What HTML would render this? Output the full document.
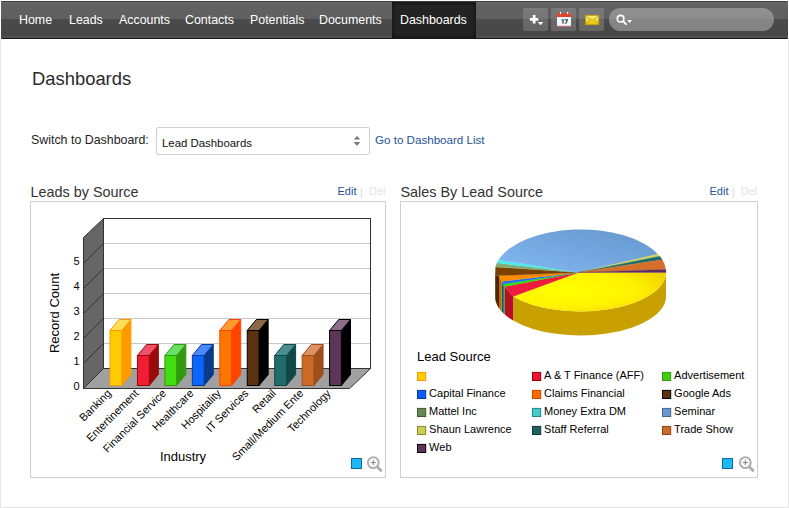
<!DOCTYPE html>
<html><head><meta charset="utf-8">
<style>
*{margin:0;padding:0;box-sizing:border-box}
html,body{width:789px;height:508px;overflow:hidden;background:#fff}
body{position:relative;font-family:"Liberation Sans",sans-serif;color:#222}
.abs{position:absolute;white-space:nowrap}
#frame{position:absolute;left:0;top:39px;width:789px;height:469px;border-left:1px solid #e6e6e6;border-right:1px solid #e6e6e6;border-bottom:1px solid #e6e6e6}
#nav{position:absolute;left:1px;top:1px;width:787px;height:38px;background:linear-gradient(#6b6b6b 0,#666 1px,#626262 3px,#5f5f5f 17px,#4b4b4b 17px,#474747 33px,#4f4f4f 34px,#4f4f4f 35px);border-top:1px solid #3a3a3a;border-bottom:1px solid #181818;border-radius:1px}
.nt{position:absolute;top:10px;font-size:12.4px;color:#fff;line-height:16px}
#act{position:absolute;left:391px;top:0;width:84px;height:36px;background:#232323;box-shadow:inset 0 0 4px #0a0a0a}
.btn{position:absolute;top:8px;width:25px;height:23px;border-radius:2px;background:linear-gradient(#7a7a7a,#747474 11px,#6a6a6a 11px,#666)}
#search{position:absolute;left:609px;top:8px;width:165px;height:23px;border-radius:11.5px;background:linear-gradient(#8f8f8f,#8d8d8d 50%,#868686 50%,#838383)}
.title{font-size:18.4px;color:#2a2a2a}
.panel{position:absolute;border:1px solid #cfcfcf}
.ph{font-size:14.4px;color:#333}
.lnk{font-size:11px;color:#1f5499}
.del{font-size:11px;color:#e4e4e4}
</style></head>
<body>
<div id="frame"></div>
<div id="nav">
  <div id="act"></div>
  <div class="nt" id="n1" style="left:18px">Home</div>
  <div class="nt" id="n2" style="left:68px">Leads</div>
  <div class="nt" id="n3" style="left:118px">Accounts</div>
  <div class="nt" id="n4" style="left:184px">Contacts</div>
  <div class="nt" id="n5" style="left:249px">Potentials</div>
  <div class="nt" id="n6" style="left:318px">Documents</div>
  <div class="nt" id="n7" style="left:399px">Dashboards</div>
  
</div>

<div class="btn" style="left:523px"></div>
<div class="btn" style="left:551px"></div>
<div class="btn" style="left:579px"></div>
<div id="search"></div>
<svg width="789" height="40" style="position:absolute;left:0;top:0">
  <defs>
    <linearGradient id="env" x1="0" y1="0" x2="0" y2="1"><stop offset="0" stop-color="#fff27a"/><stop offset="1" stop-color="#e6c200"/></linearGradient>
  </defs>
  <path d="M529.9 18h8.4v2.7h-8.4z M532.8 15h2.7v8.4h-2.7z" fill="#fff"/>
  <path d="M537.8 22.1h5.5l-2.75 3.1z" fill="#fff"/>
  <rect x="557" y="13" width="14" height="13.6" rx="1" fill="#f4f8fb"/>
  <path d="M557 14 q0 -1 1 -1 h12 q1 0 1 1 v3 h-14z" fill="#e0442a"/>
  <rect x="557" y="25.8" width="14" height="1" fill="#c85a6a"/>
  <rect x="560" y="11.8" width="1.2" height="2.4" rx="0.6" fill="#fff"/>
  <rect x="567" y="11.8" width="1.2" height="2.4" rx="0.6" fill="#fff"/>
  <path d="M561.4 19.8 l1.3 -0.6 h0.9 v4.6 h-1.2 v-3.5 l-1 0.4z M564.5 19.2 h3.5 v1 l-1.9 3.6 h-1.3 l1.9 -3.6 h-2.2z" fill="#2b3e50"/>
  <rect x="585.4" y="15.3" width="13.4" height="9.4" fill="url(#env)" stroke="#c9a200" stroke-width="0.8"/>
  <path d="M585.8 15.7 L592.1 20.6 L598.4 15.7 M585.8 24.3 L590.3 19.4 M598.4 24.3 L593.9 19.4" stroke="#b89400" stroke-width="0.7" fill="none"/>
  <circle cx="620.6" cy="18.7" r="3.3" fill="none" stroke="#fff" stroke-width="1.6"/>
  <path d="M623 21.1 L626 24.1" stroke="#fff" stroke-width="2" stroke-linecap="round"/>
  <path d="M627.1 20h4.9l-2.45 3.1z" fill="#fff"/>
</svg>

<div class="abs title" id="t1" style="left:32px;top:68px">Dashboards</div>
<div class="abs" id="t2" style="left:31px;top:133px;font-size:12.4px;color:#222">Switch to Dashboard:</div>
<div class="abs" id="sel" style="left:156px;top:127px;width:214px;height:28px;border:1px solid #d0d0d0;border-radius:2px;background:#fff"></div>
<svg width="12" height="14" style="position:absolute;left:351px;top:134px"><path d="M2.8 5.6 L6 2 L9.2 5.6 Z M2.8 8 L9.2 8 L6 11.9 Z" fill="#777"/></svg>
<div class="abs" id="t3" style="left:162px;top:137px;font-size:11.4px;color:#111">Lead Dashboards</div>
<div class="abs lnk" id="t4" style="left:375px;top:133px;font-size:11.6px">Go to Dashboard List</div>

<div class="abs ph" id="h1" style="left:30.5px;top:184px">Leads by Source</div>
<div class="abs lnk" id="e1" style="left:337.5px;top:185px">Edit</div>
<div class="abs del" id="p1" style="left:360px;top:186px;color:#d8d8d8">|</div>
<div class="abs del" id="d1" style="left:369px;top:185px">Del</div>
<div class="abs ph" id="h2" style="left:400.5px;top:184px">Sales By Lead Source</div>
<div class="abs lnk" id="e2" style="left:709.5px;top:185px">Edit</div>
<div class="abs del" id="p2" style="left:732px;top:186px;color:#d8d8d8">|</div>
<div class="abs del" id="d2" style="left:740.8px;top:185px">Del</div>

<div class="panel" style="left:30px;top:201px;width:356px;height:277px"></div>
<div class="panel" style="left:400px;top:201px;width:358px;height:277px"></div>

<svg id="charts" width="789" height="508" viewBox="0 0 789 508" style="position:absolute;left:0;top:0" font-family="Liberation Sans, sans-serif" fill="#000"><polygon points="83.5,237.5 103.5,218.5 103.5,368.5 83.5,388.5" fill="#666" stroke="#333" stroke-width="1"/><rect x="103.5" y="218.5" width="267.0" height="150.0" fill="#fff" stroke="#333" stroke-width="1"/><line x1="104.0" y1="343.5" x2="370.0" y2="343.5" stroke="#c8c8c8" stroke-width="1"/><line x1="83.5" y1="363.5" x2="103.5" y2="343.5" stroke="#333" stroke-width="1"/><line x1="104.0" y1="318.5" x2="370.0" y2="318.5" stroke="#c8c8c8" stroke-width="1"/><line x1="83.5" y1="338.5" x2="103.5" y2="318.5" stroke="#333" stroke-width="1"/><line x1="104.0" y1="293.5" x2="370.0" y2="293.5" stroke="#c8c8c8" stroke-width="1"/><line x1="83.5" y1="313.5" x2="103.5" y2="293.5" stroke="#333" stroke-width="1"/><line x1="104.0" y1="268.5" x2="370.0" y2="268.5" stroke="#c8c8c8" stroke-width="1"/><line x1="83.5" y1="288.5" x2="103.5" y2="268.5" stroke="#333" stroke-width="1"/><line x1="104.0" y1="243.5" x2="370.0" y2="243.5" stroke="#c8c8c8" stroke-width="1"/><line x1="83.5" y1="263.5" x2="103.5" y2="243.5" stroke="#333" stroke-width="1"/><polygon points="83.5,388.5 103.5,368.5 370.5,368.5 349.7,388.5" fill="#a0a0a0" stroke="#333" stroke-width="1"/><text x="79.5" y="389.7" text-anchor="end" font-size="11">0</text><text x="79.5" y="364.7" text-anchor="end" font-size="11">1</text><text x="79.5" y="339.7" text-anchor="end" font-size="11">2</text><text x="79.5" y="314.7" text-anchor="end" font-size="11">3</text><text x="79.5" y="289.7" text-anchor="end" font-size="11">4</text><text x="79.5" y="264.7" text-anchor="end" font-size="11">5</text><text transform="translate(59.3,313) rotate(-90)" text-anchor="middle" font-size="13">Record Count</text><text x="183" y="461" text-anchor="middle" font-size="13">Industry</text><polygon points="121.8,330.5 130.9,319.5 130.9,374.5 121.8,385.5" fill="#ff9900" stroke="#ff9900" stroke-width="1" stroke-linejoin="round"/><polygon points="110,330.5 119.1,319.5 130.9,319.5 121.8,330.5" fill="#ffdd55" stroke="#ff9900" stroke-width="1" stroke-linejoin="round"/><rect x="110" y="330.5" width="11.8" height="55" fill="#ffcc00" stroke="#ff9900" stroke-width="1"/><text transform="translate(111.9,394) rotate(-45)" text-anchor="end" font-size="11">Banking</text><polygon points="149.25,355.5 158.35,344.5 158.35,374.5 149.25,385.5" fill="#990a0a" stroke="#990a0a" stroke-width="1" stroke-linejoin="round"/><polygon points="137.45,355.5 146.55,344.5 158.35,344.5 149.25,355.5" fill="#f2506a" stroke="#990a0a" stroke-width="1" stroke-linejoin="round"/><rect x="137.45" y="355.5" width="11.8" height="30" fill="#f21c34" stroke="#990a0a" stroke-width="1"/><text transform="translate(139.35,394) rotate(-45)" text-anchor="end" font-size="11">Entertinement</text><polygon points="176.7,355.5 185.8,344.5 185.8,374.5 176.7,385.5" fill="#339911" stroke="#339911" stroke-width="1" stroke-linejoin="round"/><polygon points="164.9,355.5 174,344.5 185.8,344.5 176.7,355.5" fill="#66e266" stroke="#339911" stroke-width="1" stroke-linejoin="round"/><rect x="164.9" y="355.5" width="11.8" height="30" fill="#44dd11" stroke="#339911" stroke-width="1"/><text transform="translate(166.8,394) rotate(-45)" text-anchor="end" font-size="11">Financial Service</text><polygon points="204.15,355.5 213.25,344.5 213.25,374.5 204.15,385.5" fill="#0a3a8a" stroke="#0a3a8a" stroke-width="1" stroke-linejoin="round"/><polygon points="192.35,355.5 201.45,344.5 213.25,344.5 204.15,355.5" fill="#4a88ff" stroke="#0a3a8a" stroke-width="1" stroke-linejoin="round"/><rect x="192.35" y="355.5" width="11.8" height="30" fill="#0a66ff" stroke="#0a3a8a" stroke-width="1"/><text transform="translate(194.25,394) rotate(-45)" text-anchor="end" font-size="11">Healthcare</text><polygon points="231.6,330.5 240.7,319.5 240.7,374.5 231.6,385.5" fill="#ff4400" stroke="#ff4400" stroke-width="1" stroke-linejoin="round"/><polygon points="219.8,330.5 228.9,319.5 240.7,319.5 231.6,330.5" fill="#ff9a33" stroke="#ff4400" stroke-width="1" stroke-linejoin="round"/><rect x="219.8" y="330.5" width="11.8" height="55" fill="#ff7700" stroke="#ff4400" stroke-width="1"/><text transform="translate(221.7,394) rotate(-45)" text-anchor="end" font-size="11">Hospitality</text><polygon points="259.05,330.5 268.15,319.5 268.15,374.5 259.05,385.5" fill="#000000" stroke="#000000" stroke-width="1" stroke-linejoin="round"/><polygon points="247.25,330.5 256.35,319.5 268.15,319.5 259.05,330.5" fill="#8b6a45" stroke="#000000" stroke-width="1" stroke-linejoin="round"/><rect x="247.25" y="330.5" width="11.8" height="55" fill="#5c3310" stroke="#000000" stroke-width="1"/><text transform="translate(249.15,394) rotate(-45)" text-anchor="end" font-size="11">IT Services</text><polygon points="286.5,355.5 295.6,344.5 295.6,374.5 286.5,385.5" fill="#134848" stroke="#134848" stroke-width="1" stroke-linejoin="round"/><polygon points="274.7,355.5 283.8,344.5 295.6,344.5 286.5,355.5" fill="#4a8f8f" stroke="#134848" stroke-width="1" stroke-linejoin="round"/><rect x="274.7" y="355.5" width="11.8" height="30" fill="#206b6b" stroke="#134848" stroke-width="1"/><text transform="translate(276.6,394) rotate(-45)" text-anchor="end" font-size="11">Retail</text><polygon points="313.95,355.5 323.05,344.5 323.05,374.5 313.95,385.5" fill="#9e4f1c" stroke="#9e4f1c" stroke-width="1" stroke-linejoin="round"/><polygon points="302.15,355.5 311.25,344.5 323.05,344.5 313.95,355.5" fill="#dd9166" stroke="#9e4f1c" stroke-width="1" stroke-linejoin="round"/><rect x="302.15" y="355.5" width="11.8" height="30" fill="#cc6a28" stroke="#9e4f1c" stroke-width="1"/><text transform="translate(304.05,394) rotate(-45)" text-anchor="end" font-size="11">Small/Medium Ente</text><polygon points="341.4,330.5 350.5,319.5 350.5,374.5 341.4,385.5" fill="#000000" stroke="#000000" stroke-width="1" stroke-linejoin="round"/><polygon points="329.6,330.5 338.7,319.5 350.5,319.5 341.4,330.5" fill="#8f6d8a" stroke="#000000" stroke-width="1" stroke-linejoin="round"/><rect x="329.6" y="330.5" width="11.8" height="55" fill="#5c3558" stroke="#000000" stroke-width="1"/><text transform="translate(331.5,394) rotate(-45)" text-anchor="end" font-size="11">Technology</text><defs><linearGradient id="gsem" x1="0" y1="1" x2="1" y2="0"><stop offset="0" stop-color="#84b8f2"/><stop offset="1" stop-color="#6496cc"/></linearGradient><radialGradient id="gyel" cx="0.35" cy="0.45" r="0.75"><stop offset="0" stop-color="#ffff00"/><stop offset="0.6" stop-color="#fff200"/><stop offset="1" stop-color="#f0d000"/></radialGradient></defs><path d="M 666 272.4 A 85.5 39.0 0 0 1 513.13 296.41 L 513.13 320.41 A 85.5 39.0 0 0 0 666 296.4 Z" fill="#c8a000"/><polygon points="504.6,286.6 513.13,296.41 513.13,320.41 511.7,319.56 510.28,318.65 508.86,317.69 507.44,316.66 506.02,315.55 504.6,314.36" fill="#b80e2a"/><polygon points="503,284 504.6,286.6 504.6,314.36 504.33,314.12 504.07,313.88 503.8,313.63 503.53,313.38 503.27,313.13 503,312.87" fill="#229911"/><polygon points="501.6,281.4 503,284 503,312.87 502.77,312.64 502.53,312.41 502.3,312.17 502.07,311.93 501.83,311.68 501.6,311.43" fill="#0a4fbb"/><polygon points="499,275.6 501.6,281.4 501.6,311.43 501.17,310.94 500.73,310.44 500.3,309.92 499.87,309.37 499.43,308.8 499,308.19" fill="#c86400"/><polygon points="495.2,275.6 499,275.6 499,308.19 498.37,307.24 497.73,306.18 497.1,304.99 496.47,303.59 495.83,301.83 495.2,299.07" fill="#4a2800"/><path d="M 578.5 272.4 L 666 272.4 A 85.5 39.0 0 0 1 513.13 296.41 Z" fill="url(#gyel)" stroke="none" stroke-width="0.3"/><polygon points="578.5,272.4 513.13,296.41 504.6,286.6" fill="#ee1c3c" stroke="#ee1c3c" stroke-width="0.3"/><polygon points="578.5,272.4 504.6,286.6 503,284" fill="#33dd11" stroke="#33dd11" stroke-width="0.3"/><polygon points="578.5,272.4 503,284 501.6,281.4" fill="#1a6fff" stroke="#1a6fff" stroke-width="0.3"/><polygon points="578.5,272.4 501.6,281.4 499,275.6" fill="#ff8c00" stroke="#ff8c00" stroke-width="0.3"/><polygon points="578.5,272.4 499,275.6 495.2,275.6 495.67,267.01" fill="#7a4200" stroke="#7a4200" stroke-width="0.3"/><path d="M 578.5 272.4 L 495.67 267.01 A 85.5 43.0 0 0 1 497.12 262.87 Z" fill="#88aa77" stroke="#88aa77" stroke-width="0.3"/><path d="M 578.5 272.4 L 497.12 262.87 A 85.5 43.0 0 0 1 498.56 260.12 Z" fill="#44eeee" stroke="#44eeee" stroke-width="0.3"/><path d="M 578.5 272.4 L 498.56 260.12 A 85.5 43.0 0 0 1 657.99 254.23 Z" fill="url(#gsem)" stroke="none" stroke-width="0.3"/><path d="M 578.5 272.4 L 657.99 254.23 A 85.5 43.0 0 0 1 659.77 256.29 Z" fill="#d4d45a" stroke="#d4d45a" stroke-width="0.3"/><path d="M 578.5 272.4 L 659.77 256.29 A 85.5 43.0 0 0 1 662.26 259.83 Z" fill="#1f6c6c" stroke="#1f6c6c" stroke-width="0.3"/><path d="M 578.5 272.4 L 662.26 259.83 A 85.5 43.0 0 0 1 665.79 269.4 Z" fill="#d4702a" stroke="#d4702a" stroke-width="0.3"/><path d="M 578.5 272.4 L 665.79 269.4 A 85.5 43.0 0 0 1 666 272.4 Z" fill="#5c2a60" stroke="#5c2a60" stroke-width="0.3"/><text x="417" y="361" font-size="13">Lead Source</text><rect x="417.5" y="372.4" width="8.2" height="8.1" fill="#ffcc00" stroke="#ff9900" stroke-width="1"/><rect x="532.5" y="372.4" width="8.2" height="8.1" fill="#ee1133" stroke="#990000" stroke-width="1"/><text x="544.1" y="378.8" font-size="11">A &amp; T Finance (AFF)</text><rect x="662.5" y="372.4" width="8.2" height="8.1" fill="#44cc11" stroke="#339911" stroke-width="1"/><text x="674.1" y="378.8" font-size="11">Advertisement</text><rect x="417.5" y="390.4" width="8.2" height="8.1" fill="#0a5cff" stroke="#0a3a8a" stroke-width="1"/><text x="429.1" y="396.8" font-size="11">Capital Finance</text><rect x="532.5" y="390.4" width="8.2" height="8.1" fill="#ff6a00" stroke="#cc4400" stroke-width="1"/><text x="544.1" y="396.8" font-size="11">Claims Financial</text><rect x="662.5" y="390.4" width="8.2" height="8.1" fill="#5c3310" stroke="#000000" stroke-width="1"/><text x="674.1" y="396.8" font-size="11">Google Ads</text><rect x="417.5" y="408.4" width="8.2" height="8.1" fill="#668855" stroke="#445533" stroke-width="1"/><text x="429.1" y="414.8" font-size="11">Mattel Inc</text><rect x="532.5" y="408.4" width="8.2" height="8.1" fill="#44cccc" stroke="#228888" stroke-width="1"/><text x="544.1" y="414.8" font-size="11">Money Extra DM</text><rect x="662.5" y="408.4" width="8.2" height="8.1" fill="#6699cc" stroke="#44668a" stroke-width="1"/><text x="674.1" y="414.8" font-size="11">Seminar</text><rect x="417.5" y="426.4" width="8.2" height="8.1" fill="#cccc55" stroke="#888833" stroke-width="1"/><text x="429.1" y="432.8" font-size="11">Shaun Lawrence</text><rect x="532.5" y="426.4" width="8.2" height="8.1" fill="#1f6060" stroke="#0d3a3a" stroke-width="1"/><text x="544.1" y="432.8" font-size="11">Staff Referral</text><rect x="662.5" y="426.4" width="8.2" height="8.1" fill="#cc6a28" stroke="#8a4418" stroke-width="1"/><text x="674.1" y="432.8" font-size="11">Trade Show</text><rect x="417.5" y="444.4" width="8.2" height="8.1" fill="#5c3558" stroke="#000000" stroke-width="1"/><text x="429.1" y="450.8" font-size="11">Web</text><rect x="351.5" y="458.5" width="10" height="10" fill="#1bbaf6" stroke="#0d6a9c" stroke-width="1"/><circle cx="373.3" cy="462.6" r="5.4" fill="#fff" stroke="#b0b0b0" stroke-width="2"/><line x1="377.3" y1="466.7" x2="380.8" y2="470.3" stroke="#b0b0b0" stroke-width="3" stroke-linecap="round"/><path d="M 370.6 462.6 H 376.0 M 373.3 459.9 V 465.3" stroke="#808080" stroke-width="1"/><rect x="722.5" y="458.5" width="10" height="10" fill="#1bbaf6" stroke="#0d6a9c" stroke-width="1"/><circle cx="745.3" cy="462.6" r="5.4" fill="#fff" stroke="#b0b0b0" stroke-width="2"/><line x1="749.3" y1="466.7" x2="752.8" y2="470.3" stroke="#b0b0b0" stroke-width="3" stroke-linecap="round"/><path d="M 742.5999999999999 462.6 H 748.0 M 745.3 459.9 V 465.3" stroke="#808080" stroke-width="1"/></svg>
</body></html>
